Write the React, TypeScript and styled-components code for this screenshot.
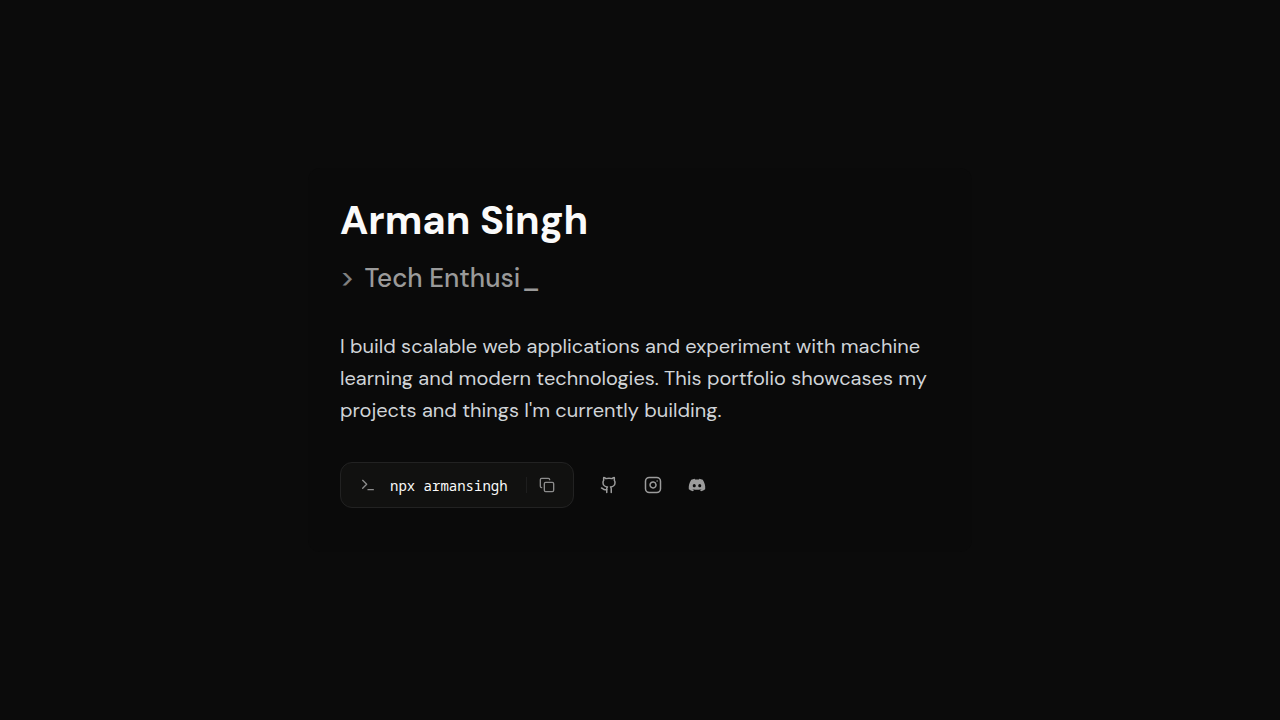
import React from 'react';
import styled, { createGlobalStyle } from 'styled-components';
import { Copy, Github, Instagram, Terminal } from 'lucide-react';
import { FaDiscord } from 'react-icons/fa';

const GlobalStyle = createGlobalStyle`
  * { box-sizing: border-box; }
  body {
    margin: 0;
    background: #0b0b0b;
    font-family: 'DM Sans', Inter, sans-serif;
  }
`;

const Page = styled.main`
  min-height: 100vh;
  display: flex;
  align-items: center;
  justify-content: center;
`;

const Hero = styled.section`
  width: 100%;
  max-width: 664px;
  padding: 24px 32px 44px;
  background: #0a0a0a;
  border-radius: 12px;
`;

const Name = styled.h1`
  margin: 0;
  font-size: 40px;
  line-height: 56px;
  font-weight: 700;
  color: #fafafa;
`;

const Role = styled.p`
  margin: 10px 0 0;
  display: flex;
  gap: 10px;
  font-size: 26px;
  line-height: 40px;
  font-weight: 500;
  color: #9a9a9a;
`;

const Prompt = styled.span`
  color: #808080;
`;

const Caret = styled.span`
  margin-left: 2px;
`;

const Bio = styled.p`
  margin: 32px 0 0;
  font-size: 20px;
  line-height: 32px;
  color: #d0d4d8;
`;

const Actions = styled.div`
  margin-top: 36px;
  display: flex;
  align-items: center;
  gap: 25px;
`;

const Command = styled.div`
  height: 46px;
  padding: 0 18px 0 19px;
  display: flex;
  align-items: center;
  gap: 14px;
  border: 1px solid #222222;
  border-radius: 12px;
  background: #111110;
  color: #8c8c8c;
`;

const Code = styled.code`
  font-family: 'Noto Sans Mono', 'DejaVu Sans Mono', monospace;
  font-size: 14px;
  color: #fafafa;
`;

const CopyButton = styled.button`
  margin-left: 4px;
  padding: 0 0 0 12px;
  height: 16px;
  display: flex;
  border: 0;
  border-left: 1px solid #1e1e1e;
  background: none;
  color: inherit;
  cursor: pointer;
`;

const Socials = styled.nav`
  display: flex;
  gap: 24px;
`;

const SocialLink = styled.a`
  padding: 1px;
  display: flex;
  color: #9c9c9c;
`;

export default function App() {
  return (
    <>
      <GlobalStyle />
      <Page>
        <Hero>
          <Name>Arman Singh</Name>
          <Role>
            <Prompt>&gt;</Prompt>
            <span>Tech Enthusi<Caret>_</Caret></span>
          </Role>
          <Bio>
            I build scalable web applications and experiment with machine learning and modern
            technologies. This portfolio showcases my projects and things I'm currently building.
          </Bio>
          <Actions>
            <Command>
              <Terminal size={16} strokeWidth={2} />
              <Code>npx armansingh</Code>
              <CopyButton type="button" aria-label="Copy command">
                <Copy size={16} strokeWidth={2} />
              </CopyButton>
            </Command>
            <Socials aria-label="Social links">
              <SocialLink href="#github" aria-label="GitHub"><Github size={18} /></SocialLink>
              <SocialLink href="#instagram" aria-label="Instagram"><Instagram size={18} /></SocialLink>
              <SocialLink href="#discord" aria-label="Discord"><FaDiscord size={18} /></SocialLink>
            </Socials>
          </Actions>
        </Hero>
      </Page>
    </>
  );
}
